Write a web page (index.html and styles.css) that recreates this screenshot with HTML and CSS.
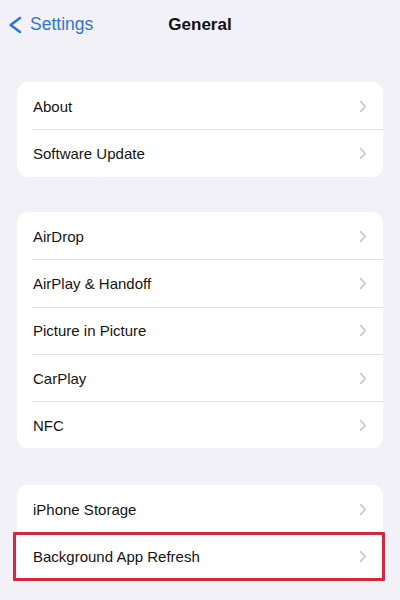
FILE: index.html
```html
<!DOCTYPE html>
<html lang="en">
<head>
<meta charset="utf-8">
<title>General</title>
<link rel="stylesheet" href="styles.css">
</head>
<body>
<div class="screen">
  <header class="nav">
    <div class="nav-left">
      <svg class="back-icon" width="14" height="20" viewBox="0 0 14 20" aria-hidden="true">
        <path d="M12 3 L2.6 10 L12 17" fill="none" stroke="#2f74d9" stroke-width="2.6" stroke-linecap="round" stroke-linejoin="round"/>
      </svg>
      <span class="back-label">Settings</span>
    </div>
    <h1 class="nav-title">General</h1>
    <div class="nav-right"></div>
  </header>

  <section class="group group-first">
    <div class="row"><span class="label">About</span><svg class="chev" width="8" height="13" viewBox="0 0 8 13"><path d="M1.6 1.6 L6.2 6.5 L1.6 11.4" fill="none" stroke="#c6c6cb" stroke-width="1.7" stroke-linecap="round" stroke-linejoin="round"/></svg></div>
    <div class="row"><span class="label">Software Update</span><svg class="chev" width="8" height="13" viewBox="0 0 8 13"><path d="M1.6 1.6 L6.2 6.5 L1.6 11.4" fill="none" stroke="#c6c6cb" stroke-width="1.7" stroke-linecap="round" stroke-linejoin="round"/></svg></div>
  </section>

  <section class="group group-second">
    <div class="row"><span class="label">AirDrop</span><svg class="chev" width="8" height="13" viewBox="0 0 8 13"><path d="M1.6 1.6 L6.2 6.5 L1.6 11.4" fill="none" stroke="#c6c6cb" stroke-width="1.7" stroke-linecap="round" stroke-linejoin="round"/></svg></div>
    <div class="row"><span class="label">AirPlay &amp; Handoff</span><svg class="chev" width="8" height="13" viewBox="0 0 8 13"><path d="M1.6 1.6 L6.2 6.5 L1.6 11.4" fill="none" stroke="#c6c6cb" stroke-width="1.7" stroke-linecap="round" stroke-linejoin="round"/></svg></div>
    <div class="row"><span class="label">Picture in Picture</span><svg class="chev" width="8" height="13" viewBox="0 0 8 13"><path d="M1.6 1.6 L6.2 6.5 L1.6 11.4" fill="none" stroke="#c6c6cb" stroke-width="1.7" stroke-linecap="round" stroke-linejoin="round"/></svg></div>
    <div class="row"><span class="label">CarPlay</span><svg class="chev" width="8" height="13" viewBox="0 0 8 13"><path d="M1.6 1.6 L6.2 6.5 L1.6 11.4" fill="none" stroke="#c6c6cb" stroke-width="1.7" stroke-linecap="round" stroke-linejoin="round"/></svg></div>
    <div class="row"><span class="label">NFC</span><svg class="chev" width="8" height="13" viewBox="0 0 8 13"><path d="M1.6 1.6 L6.2 6.5 L1.6 11.4" fill="none" stroke="#c6c6cb" stroke-width="1.7" stroke-linecap="round" stroke-linejoin="round"/></svg></div>
  </section>

  <section class="group group-third">
    <div class="row"><span class="label">iPhone Storage</span><svg class="chev" width="8" height="13" viewBox="0 0 8 13"><path d="M1.6 1.6 L6.2 6.5 L1.6 11.4" fill="none" stroke="#c6c6cb" stroke-width="1.7" stroke-linecap="round" stroke-linejoin="round"/></svg></div>
    <div class="row row-highlight"><span class="label">Background App Refresh</span><svg class="chev" width="8" height="13" viewBox="0 0 8 13"><path d="M1.6 1.6 L6.2 6.5 L1.6 11.4" fill="none" stroke="#c6c6cb" stroke-width="1.7" stroke-linecap="round" stroke-linejoin="round"/></svg></div>
  </section>
</div>
</body>
</html>
```

FILE: styles.css
```css
html, body {
  margin: 0;
  padding: 0;
  background: #f2f1f7;
}

body {
  font-family: "Liberation Sans", Arial, sans-serif;
  color: #141414;
  width: 400px;
  height: 600px;
  overflow: hidden;
}

.screen {
  display: flex;
  flex-direction: column;
}

.nav {
  display: grid;
  grid-template-columns: 1fr auto 1fr;
  align-items: center;
  height: 49px;
  padding: 0 8px;
}

.nav-left {
  display: flex;
  align-items: center;
}

.back-icon {
  display: block;
  flex: none;
}

.back-label {
  margin-left: 8px;
  font-size: 17.5px;
  color: #2f74d9;
}

.nav-title {
  margin: 0;
  font-size: 17px;
  font-weight: 700;
  color: #111;
}

.group {
  margin: 0 17px;
  background: #ffffff;
  border-radius: 11px;
}

.group-first {
  margin-top: 33px;
}

.group-second {
  margin-top: 35.4px;
}

.group-third {
  margin-top: 36.5px;
}

.row {
  position: relative;
  display: flex;
  align-items: center;
  justify-content: space-between;
  height: 47.3px;
  box-sizing: border-box;
  padding: 1px 16px 0;
  font-size: 15px;
}

.row + .row::before {
  content: "";
  position: absolute;
  top: 0;
  left: 15px;
  right: 0;
  height: 1px;
  background: #e1e1e5;
}

.label {
  white-space: nowrap;
}

.chev {
  display: block;
  flex: none;
}

.row-highlight::after {
  content: "";
  position: absolute;
  top: 0;
  bottom: -1px;
  left: -4px;
  right: -2px;
  border: 3px solid #d02a40;
  border-radius: 1px;
}
```
